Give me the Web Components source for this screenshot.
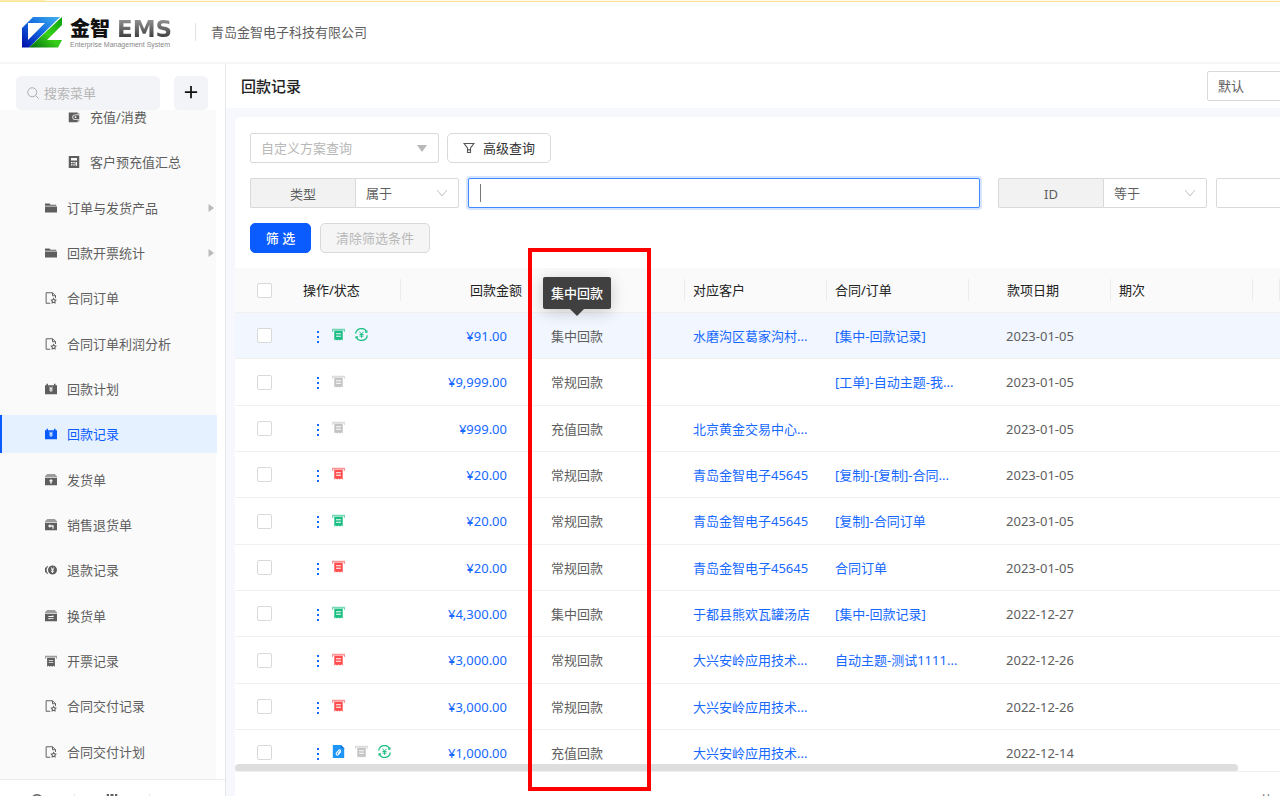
<!DOCTYPE html>
<html lang="zh-CN">
<head>
<meta charset="utf-8">
<title>回款记录 - 金智EMS</title>
<style>
  html, body { margin: 0; height: 100%; overflow: hidden; }
  body { font: 13px/20px "Noto Sans", "Noto Sans CJK SC", sans-serif; color: #5e5e5e; background: #fff; }
</style>
</head>
<body>
<ems-app></ems-app>
<script>
const RESET = `*{box-sizing:border-box}
  a{color:inherit;text-decoration:none}
  input,select,button{font:inherit;color:inherit;margin:0;border-radius:2px;outline:none}`;

const ICONS = {
  wallet: '<path d="M1 2h12v2.500H9.500a3.700 3.700 0 000 7.400H13V15H1zM14 3h1v2h-1zM14 11.500h1V14h-1z"/><path fill-rule="evenodd" d="M9.500 5.500H15V11H9.500a2.700 2.700 0 010-5.500zM10 7a1.200 1.200 0 100 2.400A1.200 1.200 0 0010 7z"/>',
  calc: '<path fill-rule="evenodd" d="M1 0h14v16H1zM4 2.500V6h8V2.500zM4 8v1.500h2V8zM7 8v1.500h2V8zM10 8v5h2V8zM4 11v1.500h2V11zM7 11v1.500h2V11z"/>',
  folder: '<path d="M0 2h6l1.500 1.500H15V5H0zM0 6h16v8H0z"/>',
  doc: '<path fill="none" stroke="currentColor" stroke-width="1.300" d="M7 15H1.500V1H10l4 4v3M10 1v4h4"/><path fill="none" stroke="currentColor" stroke-width="1.400" d="M11.500 8.800l1 1.700 2 .400-1.300 1.500.200 2.100-1.900-.800-1.900.800.200-2.100-1.300-1.500 2-.400z"/>',
  plan: '<path fill-rule="evenodd" d="M0 3h2V1h2v2h8V1h2v2h2v12H0zM5.500 5l1.600 2.300H5.700v1h1.700v.800H5.700v1h1.700V12h1.200v-1.900h1.700v-1H8.600v-.800h1.700v-1H8.900L10.500 5H9.200L8 7 6.800 5z"/>',
  ship: '<path d="M3 0h10l3 3v1H0V3z" opacity=".6"/><path fill-rule="evenodd" d="M0 5h16v10H0zM8 6.500L5 9.500h2v3h2v-3h2z"/>',
  back: '<path d="M3 0h10l3 3v1H0V3z" opacity=".6"/><path fill-rule="evenodd" d="M0 5h16v10H0zM7 6.500L4 9.200 7 12v-1.800h3V13h1.500V8.300H7z"/>',
  swap: '<path d="M3 0h10l3 3v1H0V3z" opacity=".6"/><path fill-rule="evenodd" d="M0 5h16v10H0zM4.500 8v1.200h7V8L10 6.800V8zM4.500 10.500v1.200L6 13v-1.300h5.500v-1.200z"/>',
  refund: '<path fill="none" stroke="currentColor" stroke-width="1.500" d="M3.500 3a7 7 0 000 10M1 5a6 6 0 000 6"/><path fill-rule="evenodd" d="M10 2a6 6 0 110 12 6 6 0 010-12zM7.500 4.500L9.200 7.300H8v1h1.400v.900H8v1h1.400V12h1.200v-1.800H12v-1h-1.400v-.900H12v-1h-1.200l1.700-2.800h-1.300L10 6.600 8.900 4.500z"/>',
  invoice: '<path opacity=".6" d="M0 1h16v4h-1.200V3H1.200v2H0z"/><path fill-rule="evenodd" d="M2.800 3.500h10.400V15.500l-1.800-1.300-1.700 1.300L8 14.200l-1.700 1.300-1.700-1.300-1.800 1.300zM5 6.500v1.200h6V6.500zM5 9.500v1.200h6V9.500z"/>',
  cycle: '<path fill="none" stroke="currentColor" stroke-width="1.500" d="M.8 7A7.200 7.200 0 0114.500 5M15.200 9A7.200 7.200 0 011.500 11M14.700 3v2.200h-2.400M1.300 13v-2.200h2.400"/><path fill="none" stroke="currentColor" stroke-width="1.200" d="M5.500 4.500L8 7.500l2.500-3M8 7.500V12M5.500 8h5M5.500 10h5"/>',
  attach: '<path fill="#1e96f8" d="M1 0h10l4 4v12H1z"/><path fill="#1273d0" d="M11 0l4 4h-4z"/><path fill="none" stroke="#fff" stroke-width="1.300" d="M11 8l-3.500 4a1.500 1.500 0 01-2.200-2L8.500 6.300a1 1 0 011.600 1.300L7.500 10.500"/>',
  search: '<circle cx="7" cy="7" r="6" fill="none" stroke="currentColor" stroke-width="1.300"/><path d="M11.500 11.500l4 4" stroke="currentColor" stroke-width="1.300"/>',
  plus: '<path d="M8 1v14M1 8h14" stroke="currentColor" stroke-width="2"/>',
  filter: '<path fill="none" stroke="currentColor" stroke-width="1.500" d="M1.500 2h13l-4.500 6v6H6V8zM6 10.500h4"/>',
  right: '<path d="M3 0l11 8-11 8z"/>',
  ring: '<circle cx="8" cy="8" r="7" fill="none" stroke="currentColor" stroke-width="2"/>',
  people: '<path d="M1 0h3v6H1zM6 0h4v6H6zM12 0h3v6h-3z"/>'
};

function define(name, render) {
  customElements.define(name, class extends HTMLElement {
    connectedCallback() {
      if (this.shadowRoot) return;
      const t = document.createElement('template');
      t.innerHTML = render(this);
      this.attachShadow({ mode: 'open' }).append(t.content.cloneNode(true));
    }
  });
}

define('ems-icon', el => `<style>
  :host{display:block;width:12px;height:12px;flex:none}
  svg{display:block;width:100%;height:100%}
</style><svg viewBox="0 0 16 16" fill="currentColor" aria-hidden="true">${ICONS[el.getAttribute('name')]}</svg>`);

define('ems-header', () => `<style>${RESET}
  :host{display:block;flex:none}
  .strip{height:2px;background:#fffbe8;border-bottom:1px solid #ffe493}
  .strip i{display:block;width:45px;height:1px;background:#ffedb0}
  header{height:62px;display:flex;align-items:center;padding-left:21px;border-bottom:2px solid #f5f6f7}
  .mark{width:41px;height:32px;flex:none;margin-right:8px}
  .brand{width:106px;padding-top:3px}
  .name{display:flex;align-items:center;gap:7px;height:22px}
  b{font-size:20px;line-height:22px;font-weight:900;color:#111}
  strong{font:bold 23px/22px "DejaVu Sans",sans-serif;background:linear-gradient(#999,#333);-webkit-background-clip:text;background-clip:text;color:transparent}
  small{display:block;font:7px/10px "Liberation Sans",sans-serif;color:#888;white-space:nowrap}
  .company{margin-left:19px;padding-left:15px;line-height:18px;border-left:1px solid #e2e2e2}
</style>
<div class="strip"><i></i></div>
<header>
  <svg class="mark" viewBox="0 0 41 32" aria-hidden="true">
    <defs>
      <linearGradient id="b" x1="0" y1="1" x2="1" y2="0"><stop offset="0" stop-color="#0008a8"/><stop offset=".5" stop-color="#1268e0"/><stop offset="1" stop-color="#42b4f0"/></linearGradient>
      <linearGradient id="g" x1="0" y1="1" x2="1" y2="0"><stop offset="0" stop-color="#006a10"/><stop offset=".5" stop-color="#38d018"/><stop offset="1" stop-color="#08a010"/></linearGradient>
    </defs>
    <path fill="url(#b)" fill-rule="evenodd" d="M12 1h27L8 31.500H1V12zM7 7v17L24 7z"/>
    <path fill="url(#g)" d="M41 1v8L26 24h15l-4 7.500H8z"/>
  </svg>
  <div class="brand"><div class="name"><b>金智</b><strong>EMS</strong></div><small>Enterprise Management System</small></div>
  <span class="company">青岛金智电子科技有限公司</span>
</header>`);

define('nav-item', el => `<style>${RESET}
  :host{display:block;height:38px;margin-bottom:7px}
  :host(:nth-child(3n+2)){margin-bottom:8px}
  a{display:flex;align-items:center;height:38px;padding:0 0 0 45px;gap:10px;line-height:14px}
  :host([sub]) a{padding-left:68px}
  :host([active]) a{background:#e6f1ff;color:#0a5cff;border-left:2px solid #0a5cff;padding-left:43px}
  span{flex:1}
  .arrow{width:8px;height:8px;color:#bbb;margin-right:2px}
</style><a href="#"><ems-icon name="${el.getAttribute('icon')}"></ems-icon><span><slot></slot></span>${el.hasAttribute('group') ? '<ems-icon class="arrow" name="right"></ems-icon>' : ''}</a>`);

define('ems-sidebar', () => `<style>${RESET}
  :host{display:block;box-sizing:border-box;width:226px;flex:none;border-right:1px solid #e4e6e9;overflow:hidden}
  .tools{display:flex;gap:14px;padding:12px 17px 0 16px;height:46px}
  label{flex:1;display:flex;align-items:center;gap:5px;padding-left:11px;background:#f3f4f7;border-radius:5px;color:#aaa}
  input{border:0;background:none;width:100%;min-width:0;padding:0}
  input::placeholder{color:#b5b5b5}
  button{width:34px;border:0;background:#f3f4f7;border-radius:5px;padding:0 10px 3px;color:#111}
  button ems-icon{width:14px;height:14px}
  .list{overflow:hidden;width:217px;height:669px;background:linear-gradient(90deg,#fafafa 216px,#fff 216px)}
  nav{margin-top:-12px}
  footer{display:flex;height:46px;border-top:1px solid #ececec;padding-top:14px}
  footer a{width:75px;height:20px;border-right:1px solid #e5e5e5;display:flex;justify-content:center}
  footer a:last-child{border:0}
</style>
<div class="tools"><label><ems-icon name="search"></ems-icon><input type="search" placeholder="搜索菜单" aria-label="搜索菜单"></label><button type="button" aria-label="添加"><ems-icon name="plus"></ems-icon></button></div>
<div class="list"><nav>
  <nav-item sub icon="wallet">充值/消费</nav-item>
  <nav-item sub icon="calc">客户预充值汇总</nav-item>
  <nav-item group icon="folder">订单与发货产品</nav-item>
  <nav-item group icon="folder">回款开票统计</nav-item>
  <nav-item icon="doc">合同订单</nav-item>
  <nav-item icon="doc">合同订单利润分析</nav-item>
  <nav-item icon="plan">回款计划</nav-item>
  <nav-item active icon="plan">回款记录</nav-item>
  <nav-item icon="ship">发货单</nav-item>
  <nav-item icon="back">销售退货单</nav-item>
  <nav-item icon="refund">退款记录</nav-item>
  <nav-item icon="swap">换货单</nav-item>
  <nav-item icon="invoice">开票记录</nav-item>
  <nav-item icon="doc">合同交付记录</nav-item>
  <nav-item icon="doc">合同交付计划</nav-item>
</nav></div>
<footer><a href="#" aria-label="设置"><ems-icon name="ring"></ems-icon></a><a href="#" aria-label="组织"><ems-icon name="people"></ems-icon></a><a href="#" aria-label="更多"></a></footer>`);

define('filter-field', el => `<style>${RESET}
  :host{display:flex;height:30px;min-width:0}
  label{width:105px;flex:none;border:1px solid #d9d9d9;border-right:0;border-radius:2px 0 0 2px;background:#f2f2f2;text-align:center;line-height:30px}
  select{width:104px;flex:none;appearance:none;border:1px solid #d9d9d9;border-radius:0 2px 2px 0;padding:0 10px;
    background:#fff url("data:image/svg+xml,%3Csvg xmlns='http://www.w3.org/2000/svg' width='10' height='8'%3E%3Cpath d='M0 1l5 6 5-6' fill='none' stroke='%23c0c0c0'/%3E%3C/svg%3E") no-repeat right 11px center}
  input{flex:1;min-width:0;margin-left:9px;border:1px solid #d9d9d9;background:#fff}
  :host([focused]) input{border-color:#4088ff;box-shadow:0 0 0 2px #d5e4ff;background:linear-gradient(#777,#777) no-repeat 11px center/1px 18px #fff}
</style><label for="v">${el.getAttribute('label')}</label><select aria-label="${el.getAttribute('label')}条件"><option>${el.getAttribute('op')}</option></select><input id="v" type="text">`);

define('filter-panel', () => `<style>${RESET}
  :host{display:block;box-sizing:border-box;flex:none;padding:16px 0 15px 15px;overflow:hidden}
  .row{display:flex;height:30px}
  .row+.row{margin-top:15px}
  .scheme{width:189px;appearance:none;border:1px solid #d9d9d9;color:#b8b8b8;padding:0 10px;margin-right:8px;
    background:#fff url("data:image/svg+xml,%3Csvg xmlns='http://www.w3.org/2000/svg' width='10' height='7'%3E%3Cpath d='M0 0h10L5 7z' fill='%23b8b8b8'/%3E%3C/svg%3E") no-repeat right 11px center}
  button{border:1px solid #d9d9d9;background:#fff;border-radius:5px;padding:0}
  .adv{width:104px;display:flex;align-items:center;justify-content:center;gap:8px;color:#333}
  .adv ems-icon{color:#555}
  .grow{flex:1}
  .tail{width:320px;flex:none;margin-left:18px;margin-right:-38px}
  .go{width:61px;background:#0a5cff;border-color:#0a5cff;color:#fff;font-weight:500;white-space:pre;margin-right:9px}
  .clear{width:110px;background:#f5f5f5;color:#b8b8b8}
</style>
<div class="row"><select class="scheme" aria-label="查询方案"><option>自定义方案查询</option></select><button class="adv" type="button"><ems-icon name="filter"></ems-icon>高级查询</button></div>
<div class="row"><filter-field class="grow" focused label="类型" op="属于"></filter-field><filter-field class="tail" label="ID" op="等于"></filter-field></div>
<div class="row"><button class="go" type="button">筛 选</button><button class="clear" type="button" disabled>清除筛选条件</button></div>`);

const ROWS = [
  ['green cycle', '¥91.00', '集中回款', '水磨沟区葛家沟村...', '[集中-回款记录]', '2023-01-05'],
  ['grey', '¥9,999.00', '常规回款', '', '[工单]-自动主题-我...', '2023-01-05'],
  ['grey', '¥999.00', '充值回款', '北京黄金交易中心...', '', '2023-01-05'],
  ['red', '¥20.00', '常规回款', '青岛金智电子45645', '[复制]-[复制]-合同...', '2023-01-05'],
  ['green', '¥20.00', '常规回款', '青岛金智电子45645', '[复制]-合同订单', '2023-01-05'],
  ['red', '¥20.00', '常规回款', '青岛金智电子45645', '合同订单', '2023-01-05'],
  ['green', '¥4,300.00', '集中回款', '于都县熊欢瓦罐汤店', '[集中-回款记录]', '2022-12-27'],
  ['red', '¥3,000.00', '常规回款', '大兴安岭应用技术...', '自动主题-测试1111...', '2022-12-26'],
  ['red', '¥3,000.00', '常规回款', '大兴安岭应用技术...', '', '2022-12-26'],
  ['attach grey cycle', '¥1,000.00', '充值回款', '大兴安岭应用技术...', '', '2022-12-14']
];
const stateIcon = s => s === 'cycle' || s === 'attach'
  ? `<ems-icon class="${s}" name="${s}"></ems-icon>` : `<ems-icon class="${s}" name="invoice"></ems-icon>`;
const link = t => t ? `<a href="#">${t}</a>` : '';

define('record-table', () => `<style>${RESET}
  :host{display:block;box-sizing:border-box;flex:1;min-height:0;overflow:hidden;position:relative;border-bottom:1px solid #f0f0f0}
  table{width:100%;table-layout:fixed;border-collapse:separate;border-spacing:0}
  th,td{height:46px;padding:0 8px;text-align:left;font-weight:400;border-bottom:1px solid #f0f0f0;white-space:nowrap}
  th{height:45px;background:linear-gradient(#ececec,#ececec) no-repeat right center/1px 22px #fafafa;color:#222}
  th:first-child,th.amt{background:#fafafa}
  tbody tr:nth-child(3n+2) td{height:47px}
  tbody tr:first-child td{background:#f1f6ff}
  td a{color:#1668ff}
  input{appearance:none;display:block;width:15px;height:15px;border:1px solid #d9d9d9;background:#fff;margin-left:14px}
  th.amt{text-align:right;padding-right:21px}
  td.amt{text-align:right;padding-right:36px}
  td.type{position:relative}
  th.date{text-align:center;padding-right:22px}
  td.date{text-align:center}
  .ops{display:flex;align-items:center;gap:10px;padding-left:14px;height:16px}
  .dots{width:2px;height:12px;margin:2px 3px 0 0;border:0;padding:0;border-radius:0;background:repeating-linear-gradient(#1668ff 0 2px,transparent 2px 5px)}
  .ops ems-icon{width:13px;height:13px;margin-bottom:2px}
  .green,.cycle{color:#1bbf83}.grey{color:#c4c4c4}.red{color:#ff4d4f}
  .tip{position:absolute;left:0;top:-36px;height:32px;padding:0 8px;line-height:32px;border-radius:2px;background:#404040;color:#fff;font-weight:500;box-shadow:0 3px 16px #0003;z-index:1}
  .tip::after{content:"";position:absolute;left:50%;top:100%;margin-left:-7px;border:7px solid transparent;border-bottom:0;border-top-color:#404040}
  .bar{position:absolute;left:0;bottom:-1px;width:96%;height:8px;border-radius:4px;background:#dedede}
</style>
<table>
  <colgroup><col style="width:60px"><col style="width:106px"><col style="width:142px"><col style="width:142px"><col style="width:142px"><col style="width:142px"><col style="width:142px"><col style="width:142px"><col></colgroup>
  <thead><tr><th><input type="checkbox" aria-label="全选"></th><th>操作/状态</th><th class="amt">回款金额</th><th>类型</th><th>对应客户</th><th>合同/订单</th><th class="date">款项日期</th><th>期次</th><th></th></tr></thead>
  <tbody>${ROWS.map(([st, amt, type, cust, order, date], i) => `<tr><td><input type="checkbox" aria-label="选择第${i + 1}行"></td>
    <td><div class="ops"><button class="dots" type="button" aria-label="更多操作"></button>${st.split(' ').map(stateIcon).join('')}</div></td>
    <td class="amt">${link(amt)}</td><td class="type">${i === 0 ? '<div class="tip" role="tooltip">集中回款</div>' : ''}${type}</td>
    <td>${link(cust)}</td><td>${link(order)}</td><td class="date">${date}</td><td></td><td></td></tr>`).join('')}</tbody>
</table><div class="bar"></div>`);

define('record-page', () => `<style>${RESET}
  :host{display:flex;flex-direction:column;flex:1;min-width:0;background:#f6f8fd}
  .title{flex:none;display:flex;align-items:center;justify-content:space-between;height:44px;padding-left:15px;background:#fff;overflow:hidden}
  h1{margin:0;font-size:15px;line-height:22px;font-weight:500;color:#222}
  .title select{width:93px;height:30px;margin-right:-20px;appearance:none;border:1px solid #d9d9d9;background:#fff;padding:0 10px}
  section{flex:1;min-height:0;display:flex;flex-direction:column;margin:9px 0 0 9px;background:#fff;border-radius:6px 0 0 0;overflow:hidden}
  .pager{flex:none;height:24px;padding:18px 0 0 21px;display:flex;justify-content:flex-end;overflow:hidden}
</style>
<div class="title"><h1>回款记录</h1><select aria-label="视图"><option>默认</option></select></div>
<section><filter-panel></filter-panel><record-table></record-table><div class="pager">共2</div></section>`);

define('ems-app', () => `<style>
  :host{display:flex;flex-direction:column;height:100vh;position:relative;overflow:hidden}
  main{flex:1;min-height:0;display:flex}
  .highlight{position:absolute;box-sizing:border-box;left:528px;top:248px;bottom:5px;width:123px;border:4px solid #f00;z-index:5;pointer-events:none}
</style><ems-header></ems-header><main><ems-sidebar></ems-sidebar><record-page></record-page></main><div class="highlight"></div>`);
</script>
</body>
</html>
